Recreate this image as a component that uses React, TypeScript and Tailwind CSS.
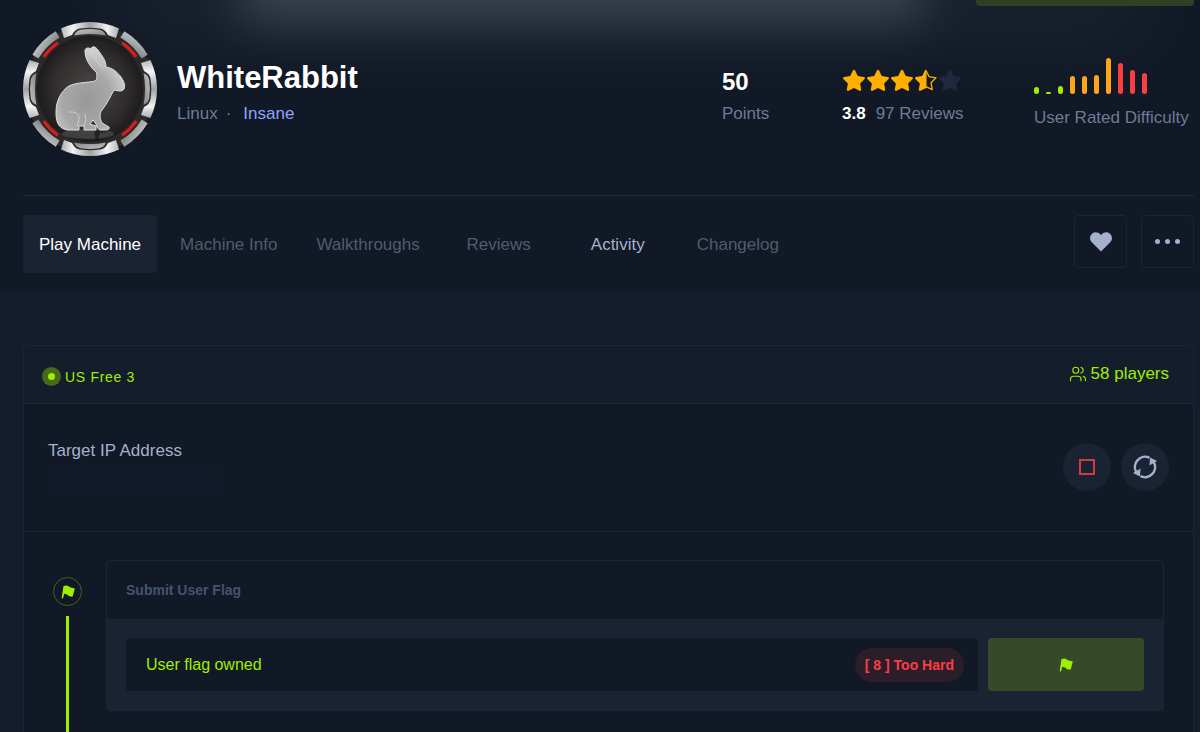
import React, { useState } from "react";
import { Users } from "lucide-react";

const tabs = [
  { name: "Play Machine", tone: "bg-[#1a2332] text-white" },
  { name: "Machine Info", tone: "text-[#525b6e]" },
  { name: "Walkthroughs", tone: "text-[#525b6e]" },
  { name: "Reviews", tone: "text-[#525b6e]" },
  { name: "Activity", tone: "text-[#a4b1cd]" },
  { name: "Changelog", tone: "text-[#525b6e]" },
];

const ratings = [
  { height: 7, color: "bg-[#9fef00]" },
  { height: 2, color: "bg-[#9fef00]" },
  { height: 8, color: "bg-[#9fef00]" },
  { height: 18, color: "bg-[#ffa51c]" },
  { height: 18, color: "bg-[#ffa51c]" },
  { height: 19, color: "bg-[#ffa51c]" },
  { height: 36, color: "bg-[#ffa51c]" },
  { height: 31, color: "bg-[#fb3e42]" },
  { height: 24, color: "bg-[#fb3e42]" },
  { height: 21, color: "bg-[#fb3e42]" },
];

const starPath =
  "M12 1.8c.5 0 .9.3 1.1.7l2.7 5.6 6.1.9c1 .1 1.4 1.3.7 2l-4.5 4.4 1.1 6.1c.2 1-.9 1.7-1.7 1.3L12 19.9l-5.5 2.9c-.8.4-1.9-.3-1.7-1.3l1.1-6.1-4.5-4.4c-.7-.7-.3-1.9.7-2l6.1-.9 2.7-5.6c.2-.4.6-.7 1.1-.7z";

function Star({ kind }: { kind: "full" | "half" | "empty" }) {
  if (kind === "half") {
    return (
      <svg viewBox="0 0 24 24" className="size-6">
        <defs>
          <clipPath id="halfStar">
            <rect x="0" y="0" width="12.5" height="24" />
          </clipPath>
        </defs>
        <path d={starPath} fill="#ffaf00" clipPath="url(#halfStar)" />
        <path
          d="M12 2.5l3.1 6.2 6.9 1.1-5 4.9 1.3 7L12 18.6"
          fill="none"
          stroke="#ffaf00"
          strokeWidth="1.3"
          strokeLinejoin="round"
        />
      </svg>
    );
  }
  return (
    <svg viewBox="0 0 24 24" className="size-6">
      <path d={starPath} fill={kind === "full" ? "#ffaf00" : "#1f293b"} />
    </svg>
  );
}

function Flag() {
  return (
    <svg viewBox="0 0 16 16" className="size-4" fill="#9fef00">
      <path d="M3.4 2.2C5.4 1 7.4 1.3 9 2.4l.8.9 5 1.3-2.1 7.8c-1.9.5-3.6.1-4.8-1.2l-.7-.7-3-.8L3 14.6l-1.3-.4z" />
    </svg>
  );
}

function Emblem() {
  return (
    <svg
      viewBox="0 0 134 134"
      className="size-[134px] shrink-0"
      role="img"
      aria-label="WhiteRabbit emblem"
    >
      <defs>
        <radialGradient id="core">
          <stop offset="0" stopColor="#4b4646" />
          <stop offset="0.7" stopColor="#302d2d" />
          <stop offset="1" stopColor="#1d1b1c" />
        </radialGradient>
        <linearGradient id="metal" x1="0" y1="0" x2="1" y2="0">
          <stop offset="0" stopColor="#b4b6b8" />
          <stop offset="0.2" stopColor="#f4f4f4" />
          <stop offset="0.5" stopColor="#a0a2a4" />
          <stop offset="0.8" stopColor="#f2f2f2" />
          <stop offset="1" stopColor="#a9abad" />
        </linearGradient>
        <linearGradient id="steel" x1="0" y1="0" x2="1" y2="1">
          <stop offset="0" stopColor="#c3c5c6" />
          <stop offset="1" stopColor="#808284" />
        </linearGradient>
        <radialGradient id="fur" cx="0.45" cy="0.65" r="0.6">
          <stop offset="0" stopColor="#989898" />
          <stop offset="0.6" stopColor="#a8a8a8" />
          <stop offset="1" stopColor="#cfcfcf" />
        </radialGradient>
      </defs>
      <circle cx="67" cy="67" r="65" fill="#2b2a2b" />
      <circle cx="67" cy="67" r="53" fill="url(#core)" />
      {/* large plates on the four sides */}
      {[0, 90, 180, 270].map((angle) => (
        <g key={angle} transform={`rotate(${angle} 67 67)`}>
          <path
            d="M38 6.6A67 67 0 0 1 96 6.6L93 16L85 13Q82 7 77 6.5Q67 5 57 6.5Q52 7 49 13L41 16Z"
            fill="url(#metal)"
          />
          <path
            d="M51 13.5Q53 8.5 58 7.8Q67 6.3 76 7.8Q81 8.5 83 13.5Q67 10.5 51 13.5Z"
            fill="url(#steel)"
          />
        </g>
      ))}
      {/* small plates with red lights on the diagonals */}
      {[45, 135, 225, 315].map((angle) => (
        <g key={angle} transform={`rotate(${angle} 67 67)`}>
          <path
            d="M50.5 2A67 67 0 0 1 83.5 2L82 9A60 60 0 0 0 52 9Z"
            fill="url(#steel)"
          />
          <path
            d="M57 11.7A56 56 0 0 1 77 11.7"
            fill="none"
            stroke="#dc1c1b"
            strokeWidth="3"
          />
        </g>
      ))}
      <ellipse cx="65" cy="112" rx="26" ry="5" fill="#666" opacity="0.45" />
      <path
        d="M71 109l9-1 5 2-8 1-2 8-3-4z"
        fill="#171717"
        opacity="0.7"
      />
      <path
        d="M74 51C67 45 62 37 62 29C62 26 65 25 68 27C69 23 73 25 75 28C79 34 83 38 83 45C90 46 94 50 98 55C100 58 103 63 101 67C99 70 96 69 91 68C87 75 84 82 79 88C76 92 77 97 79 101L86 105C87 107 85 108 82 108H77C75 107 74 105 73 102L70 98L67 102L73 104V108H61V104H56V108H44C34 106 33 98 33 90C33 79 38 69 46 64C54 60 64 61 72 59C75 57 73 54 74 51Z"
        fill="url(#fur)"
        stroke="#dedede"
        strokeWidth="1"
      />
      <path
        d="M67 29Q71 38 80 46M46 90Q57 89 56 98L54 104M62 91Q64 98 61 104"
        fill="none"
        stroke="#d5d5d5"
        strokeWidth="0.8"
      />
    </svg>
  );
}

function Header() {
  const [active, setActive] = useState<string>("Play Machine");

  return (
    <header className="relative overflow-hidden bg-[#111826] pr-1.5 pb-[19px] pl-[23px]">
      {/* soft light behind the title */}
      <div className="absolute -top-11 right-[23%] left-[20%] h-16 bg-[#58606a] opacity-75 blur-xl" />
      <div className="absolute -top-8 right-[5%] left-[10%] h-16 bg-[#2a323f] opacity-50 blur-2xl" />
      <div className="relative flex justify-end">
        <button
          aria-label="Connect"
          className="h-1.5 w-[218px] rounded-b bg-[#2f4025]"
        />
      </div>
      <div className="relative flex items-start justify-between border-b border-[#222b38] pt-4 pb-[39px]">
        <div className="flex">
          <Emblem />
          <div className="pt-9 pl-5">
            <h1 className="text-[31px] leading-10 font-bold text-white">
              WhiteRabbit
            </h1>
            <p className="mt-1 flex gap-2 leading-6 text-[#6e7b96]">
              <span>Linux</span>
              <span>·</span>
              <a href="#difficulty" className="ml-1 text-[#8ba6f8]">
                Insane
              </a>
            </p>
          </div>
        </div>
        <div className="flex gap-18 text-[#6e7b96]">
          <div className="min-w-12 pt-11">
            <div className="text-2xl leading-8 font-bold text-white">50</div>
            <div className="leading-8">Points</div>
          </div>
          <div className="w-[120px] pt-[46px] whitespace-nowrap">
            <div className="flex">
              <Star kind="full" />
              <Star kind="full" />
              <Star kind="full" />
              <Star kind="half" />
              <Star kind="empty" />
            </div>
            <div className="flex gap-2.5 pt-1.5 leading-8">
              <span className="font-bold text-white">3.8</span>
              <span>97 Reviews</span>
            </div>
          </div>
          <div className="min-w-40 pt-9">
            <div className="flex h-9 items-end gap-[7px]">
              {ratings.map((bar, i) => (
                <div
                  key={i}
                  className={`w-[5px] rounded-full ${bar.color}`}
                  style={{ height: bar.height }}
                />
              ))}
            </div>
            <div className="pt-2 leading-8">User Rated Difficulty</div>
          </div>
        </div>
      </div>
      <div className="flex items-start justify-between pt-[19px]">
        <nav className="flex gap-[7px]">
          {tabs.map((tab) => (
            <button
              key={tab.name}
              onClick={() => setActive(tab.name)}
              aria-current={active === tab.name}
              className={`h-[58px] min-w-28 rounded px-4 pt-0.5 ${tab.tone}`}
            >
              {tab.name}
            </button>
          ))}
        </nav>
        <div className="flex gap-3.5">
          <button
            aria-label="Favourite"
            className="flex size-[53px] items-center justify-center rounded border border-[#1c2533]"
          >
            <svg viewBox="0 0 22 20" className="h-5 w-[22px]" fill="#a4b1cd">
              <path d="M11 19.5L1.8 10.3C-.6 7.8-.5 3.9 2 1.7 4.6-.4 8.1.1 10.2 2.3l.8.8.8-.8C13.9.1 17.4-.4 20 1.7c2.5 2.2 2.6 6.1.2 8.6z" />
            </svg>
          </button>
          <button
            aria-label="More"
            className="flex size-[53px] items-center justify-center gap-[5px] rounded border border-[#1c2533]"
          >
            <span className="size-[5px] rounded-full bg-[#a4b1cd]" />
            <span className="size-[5px] rounded-full bg-[#a4b1cd]" />
            <span className="size-[5px] rounded-full bg-[#a4b1cd]" />
          </button>
        </div>
      </div>
    </header>
  );
}

function FlagStep() {
  return (
    <section className="flex flex-1 pr-[29px] pl-[29px]">
      <div className="flex w-[29px] flex-col items-center gap-2.5 pt-[45px]">
        <div className="flex size-[29px] shrink-0 items-center justify-center rounded-full border border-[#46631c]">
          <Flag />
        </div>
        <div className="w-[3px] flex-1 bg-[#9fef00]" />
      </div>
      <div className="flex-1 pt-7 pb-5 pl-6">
        <div className="rounded border border-[#1c2533]">
          <h2 className="px-[19px] text-sm leading-[58px] font-bold text-[#455372]">
            Submit User Flag
          </h2>
          <div className="flex gap-2.5 bg-[#1a2332] p-[19px]">
            <div className="flex h-[53px] flex-1 items-center justify-between rounded bg-[#111826] pr-3.5 pl-5">
              <span className="text-base text-[#9fef00]">User flag owned</span>
              <span className="rounded-full bg-[#2c1d2a] px-2.5 text-sm leading-[34px] font-bold text-[#fb3e42]">
                [ 8 ] Too Hard
              </span>
            </div>
            <button
              aria-label="Submit flag"
              className="flex w-[156px] items-center justify-center rounded bg-[#354a28]"
            >
              <Flag />
            </button>
          </div>
        </div>
      </div>
    </section>
  );
}

function App() {
  return (
    <div className="flex min-h-screen flex-col bg-[#141d2b] font-['Liberation_Sans',Arial,sans-serif] text-[17px]">
      <Header />
      <main className="flex flex-1 flex-col pt-[53px] pr-1.5 pl-[23px]">
        <div className="flex flex-1 flex-col rounded-t border border-b-0 border-[#1c2533] bg-[#111826]">
          <div className="flex h-[58px] items-center justify-between border-b border-[#1c2533] bg-[#141d2b] pr-6 pl-[18px] text-[#9fef00]">
            <div className="flex items-center gap-1 pt-1">
              <span className="flex size-[19px] items-center justify-center rounded-full bg-[#446a1a]">
                <span className="size-[7px] rounded-full bg-[#9fef00]" />
              </span>
              <span className="text-sm tracking-wider">US Free 3</span>
            </div>
            <div className="flex items-center gap-1 pb-0.5">
              <Users size={18} strokeWidth={1.5} />
              <span>58 players</span>
            </div>
          </div>
          <div className="flex h-32 items-center justify-between border-b border-[#1c2533] pr-6 pb-0.5 pl-6">
            <div>
              <div className="leading-6 text-[#a4b1cd]">Target IP Address</div>
              <div className="mt-2 h-6 w-[170px] bg-[#101a29]" />
            </div>
            <div className="flex gap-2.5">
              <button
                aria-label="Stop machine"
                className="flex size-12 items-center justify-center rounded-full bg-[#1a2332]"
              >
                <span className="size-4 border-2 border-[#cf3a43]" />
              </button>
              <button
                aria-label="Reset machine"
                className="flex size-12 items-center justify-center rounded-full bg-[#1a2332]"
              >
                <svg viewBox="0 0 24 24" className="size-6">
                  <path
                    d="M16.5 2.8A10.2 10.2 0 0 0 3.2 17M7.5 21.2A10.2 10.2 0 0 0 20.8 7"
                    fill="none"
                    stroke="#a4b1cd"
                    strokeWidth="2.5"
                  />
                  <path
                    d="M0 18L7.5 13.6L7 21.5zM24 6L16.5 10.4L17 2.5z"
                    fill="#a4b1cd"
                  />
                </svg>
              </button>
            </div>
          </div>
          <FlagStep />
        </div>
      </main>
    </div>
  );
}

export default App;
